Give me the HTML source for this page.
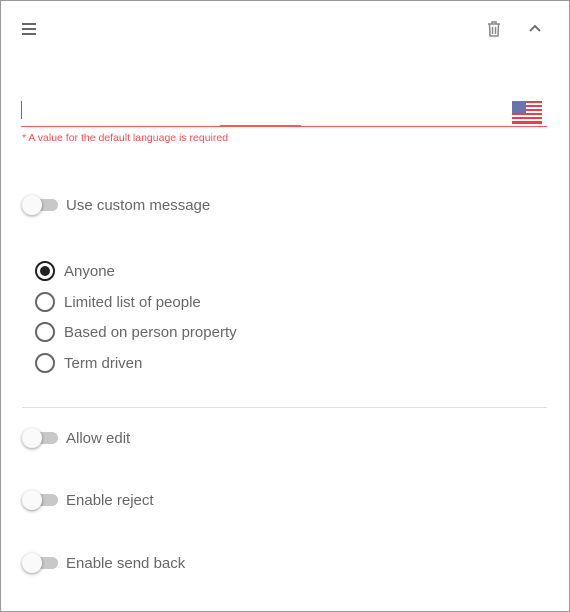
<!DOCTYPE html>
<html><head><style>
*{margin:0;padding:0;box-sizing:border-box}
body{width:570px;height:612px;background:#fff;font-family:"Liberation Sans",sans-serif;position:relative;overflow:hidden}
.frame{position:absolute;left:0;top:0;width:570px;height:612px;border:1px solid #999}
.abs{position:absolute}
.lbl{position:absolute;font-size:15px;color:#666;line-height:18px}
.track{position:absolute;width:36px;height:12px;border-radius:6px;background:#c8c8c8}
.thumb{position:absolute;width:20px;height:20px;border-radius:50%;background:#fafafa;box-shadow:0 1px 3px rgba(0,0,0,.4)}
.radio{position:absolute;width:20px;height:20px;border-radius:50%;border:2px solid #666}
</style></head><body>
<div class="frame"></div>
<div class="abs" style="left:22px;top:23px;width:14px;height:2px;background:#666"></div>
<div class="abs" style="left:22px;top:28px;width:14px;height:2px;background:#666"></div>
<div class="abs" style="left:22px;top:33px;width:14px;height:2px;background:#666"></div>
<svg class="abs" style="left:486px;top:20px" width="16" height="18" viewBox="0 0 16 18"><path d="M2 4h12M6 4V2h4v2M3.5 4l.5 12h8l.5-12M6.5 7v7M9.5 7v7" fill="none" stroke="#888" stroke-width="1.5"/></svg>
<svg class="abs" style="left:528px;top:24px" width="14" height="10" viewBox="0 0 14 10"><path d="M2 7l5-5 5 5" fill="none" stroke="#666" stroke-width="1.8"/></svg>
<div class="abs" style="left:21px;top:101px;width:1px;height:18px;background:#e33"></div>
<div class="abs" style="left:21px;top:126px;width:526px;height:1px;background:#f55"></div>
<div class="abs" style="left:220px;top:125px;width:81px;height:1px;background:#f55"></div>
<svg class="abs" style="left:512px;top:101px" width="30" height="23" viewBox="0 0 30 23">
<rect width="30" height="23" fill="#fff"/>
<g fill="#e8404a"><rect y="0" width="30" height="2"/><rect y="4" width="30" height="2"/><rect y="8" width="30" height="2"/><rect y="12" width="30" height="2"/><rect y="16" width="30" height="2"/><rect y="20" width="30" height="3"/></g>
<rect width="14" height="12" fill="#6a72b0"/></svg>
<div class="abs" style="left:22px;top:132px;font-size:10.5px;color:#f05050">* A value for the default language is required</div>
<div class="track" style="left:22px;top:199px"></div><div class="thumb" style="left:22px;top:195px"></div>
<div class="lbl" style="left:66px;top:197px">Use custom message</div>
<div class="abs" style="left:40px;top:266px;width:10px;height:10px;border-radius:50%;background:#222"></div>
<div class="radio" style="left:35px;top:261px;border-color:#222"></div>
<div class="lbl" style="left:64px;top:263px">Anyone</div>
<div class="radio" style="left:35px;top:292px"></div><div class="lbl" style="left:64px;top:294px">Limited list of people</div>
<div class="radio" style="left:35px;top:322px"></div><div class="lbl" style="left:64px;top:324px">Based on person property</div>
<div class="radio" style="left:35px;top:353px"></div><div class="lbl" style="left:64px;top:355px">Term driven</div>
<div class="abs" style="left:22px;top:407px;width:525px;height:1px;background:#ddd"></div>
<div class="track" style="left:22px;top:432px"></div><div class="thumb" style="left:22px;top:428px"></div>
<div class="lbl" style="left:66px;top:430px">Allow edit</div>
<div class="track" style="left:22px;top:494px"></div><div class="thumb" style="left:22px;top:490px"></div>
<div class="lbl" style="left:66px;top:492px">Enable reject</div>
<div class="track" style="left:22px;top:557px"></div><div class="thumb" style="left:22px;top:553px"></div>
<div class="lbl" style="left:66px;top:555px">Enable send back</div>
</body></html>
